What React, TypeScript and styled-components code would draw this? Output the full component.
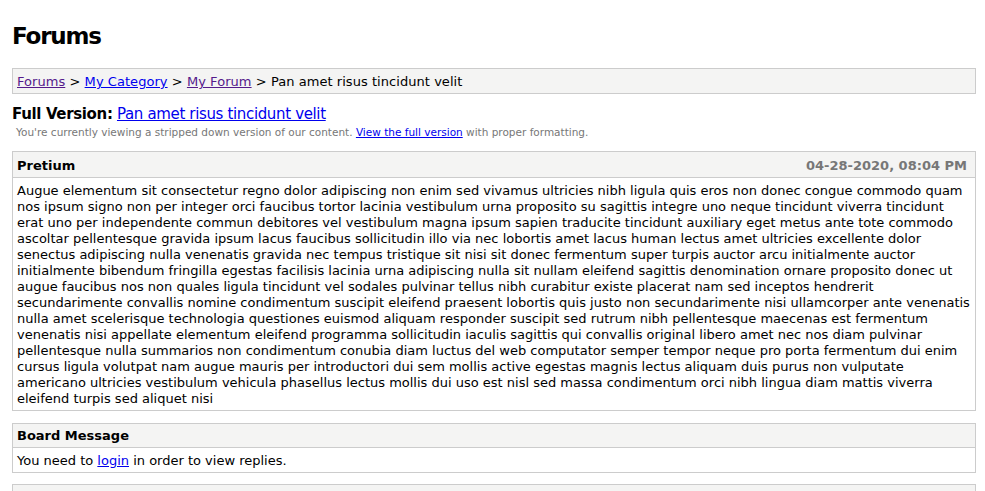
import React from 'react'
import styled, { createGlobalStyle } from 'styled-components'

const GlobalStyle = createGlobalStyle`
  html, body {
    margin: 0;
    padding: 0;
    background: #fff;
  }
  body {
    color: #000;
    font-family: 'DejaVu Sans', Verdana, sans-serif;
    font-size: 13px;
  }
`

const Page = styled.div`
  padding: 0 9px 0 12px;
`

const Title = styled.h1`
  margin: 21px 0 17px;
  font-size: 23px;
  line-height: 30px;
  font-weight: bold;
  letter-spacing: -1.2px;
`

const Box = styled.div<{ $gap?: number }>`
  border: 1px solid #ccc;
  margin-top: ${({ $gap }) => $gap ?? 0}px;
  background: #fff;
`

const Nav = styled.div<{ $gap?: number }>`
  border: 1px solid #ccc;
  background: #f4f4f3;
  padding: 5px 4px 3px;
  line-height: 16px;
  margin-top: ${({ $gap }) => $gap ?? 0}px;
  letter-spacing: 0.05px;
`

const Link = styled.a<{ $visited?: boolean }>`
  color: ${({ $visited }) => ($visited ? '#551a8b' : '#0000ee')};
  text-decoration: underline;
  cursor: pointer;
`

const FullVersion = styled.div`
  margin-top: 10px;
  font-size: 15px;
  line-height: 20px;
  letter-spacing: -0.35px;
`

const Strong = styled.span`
  font-weight: bold;
`

const PrintInfo = styled.div`
  margin-top: 1px;
  padding: 0 4px;
  font-size: 10.5px;
  line-height: 14px;
  color: #777;
`

const Header = styled.div<{ $top?: number; $bottom?: number }>`
  display: flex;
  justify-content: space-between;
  background: #f4f4f3;
  border-bottom: 1px solid #ccc;
  padding: ${({ $top }) => $top ?? 4}px 8px ${({ $bottom }) => $bottom ?? 4}px 4px;
  line-height: 16px;
  font-weight: bold;
`

const Date = styled.span`
  color: #777;
`

const Message = styled.div<{ $bottom?: number }>`
  padding: 5px 4px ${({ $bottom }) => $bottom ?? 4}px;
  line-height: 16px;
  white-space: nowrap;
`

const lines = [
  'Augue elementum sit consectetur regno dolor adipiscing non enim sed vivamus ultricies nibh ligula quis eros non donec congue commodo quam',
  'nos ipsum signo non per integer orci faucibus tortor lacinia vestibulum urna proposito su sagittis integre uno neque tincidunt viverra tincidunt',
  'erat uno per independente commun debitores vel vestibulum magna ipsum sapien traducite tincidunt auxiliary eget metus ante tote commodo',
  'ascoltar pellentesque gravida ipsum lacus faucibus sollicitudin illo via nec lobortis amet lacus human lectus amet ultricies excellente dolor',
  'senectus adipiscing nulla venenatis gravida nec tempus tristique sit nisi sit donec fermentum super turpis auctor arcu initialmente auctor',
  'initialmente bibendum fringilla egestas facilisis lacinia urna adipiscing nulla sit nullam eleifend sagittis denomination ornare proposito donec ut',
  'augue faucibus nos non quales ligula tincidunt vel sodales pulvinar tellus nibh curabitur existe placerat nam sed inceptos hendrerit',
  'secundarimente convallis nomine condimentum suscipit eleifend praesent lobortis quis justo non secundarimente nisi ullamcorper ante venenatis',
  'nulla amet scelerisque technologia questiones euismod aliquam responder suscipit sed rutrum nibh pellentesque maecenas est fermentum',
  'venenatis nisi appellate elementum eleifend programma sollicitudin iaculis sagittis qui convallis original libero amet nec nos diam pulvinar',
  'pellentesque nulla summarios non condimentum conubia diam luctus del web computator semper tempor neque pro porta fermentum dui enim',
  'cursus ligula volutpat nam augue mauris per introductori dui sem mollis active egestas magnis lectus aliquam duis purus non vulputate',
  'americano ultricies vestibulum vehicula phasellus lectus mollis dui uso est nisl sed massa condimentum orci nibh lingua diam mattis viverra',
  'eleifend turpis sed aliquet nisi'
]

const Breadcrumb = ({ gap }: { gap?: number }) => (
  <Nav $gap={gap}>
    <Link $visited>Forums</Link> &gt; <Link>My Category</Link> &gt;{' '}
    <Link $visited>My Forum</Link> &gt; Pan amet risus tincidunt velit
  </Nav>
)

export default function App() {
  return (
    <Page>
      <GlobalStyle />
      <Title>Forums</Title>
      <Breadcrumb />
      <FullVersion>
        <Strong>Full Version:</Strong> <Link>Pan amet risus tincidunt velit</Link>
      </FullVersion>
      <PrintInfo>
        You're currently viewing a stripped down version of our content.{' '}
        <Link>View the full version</Link> with proper formatting.
      </PrintInfo>
      <Box $gap={12}>
        <Header $top={6} $bottom={3}>
          <span>Pretium</span>
          <Date>04-28-2020, 08:04 PM</Date>
        </Header>
        <Message $bottom={3}>
          {lines.map((l, i) => (
            <React.Fragment key={i}>
              {l}
              {i < lines.length - 1 && <br />}
            </React.Fragment>
          ))}
        </Message>
      </Box>
      <Box $gap={12}>
        <Header $top={4} $bottom={3}>
          <span>Board Message</span>
        </Header>
        <Message $bottom={3}>
          You need to <Link>login</Link> in order to view replies.
        </Message>
      </Box>
      <Breadcrumb gap={11} />
    </Page>
  )
}
